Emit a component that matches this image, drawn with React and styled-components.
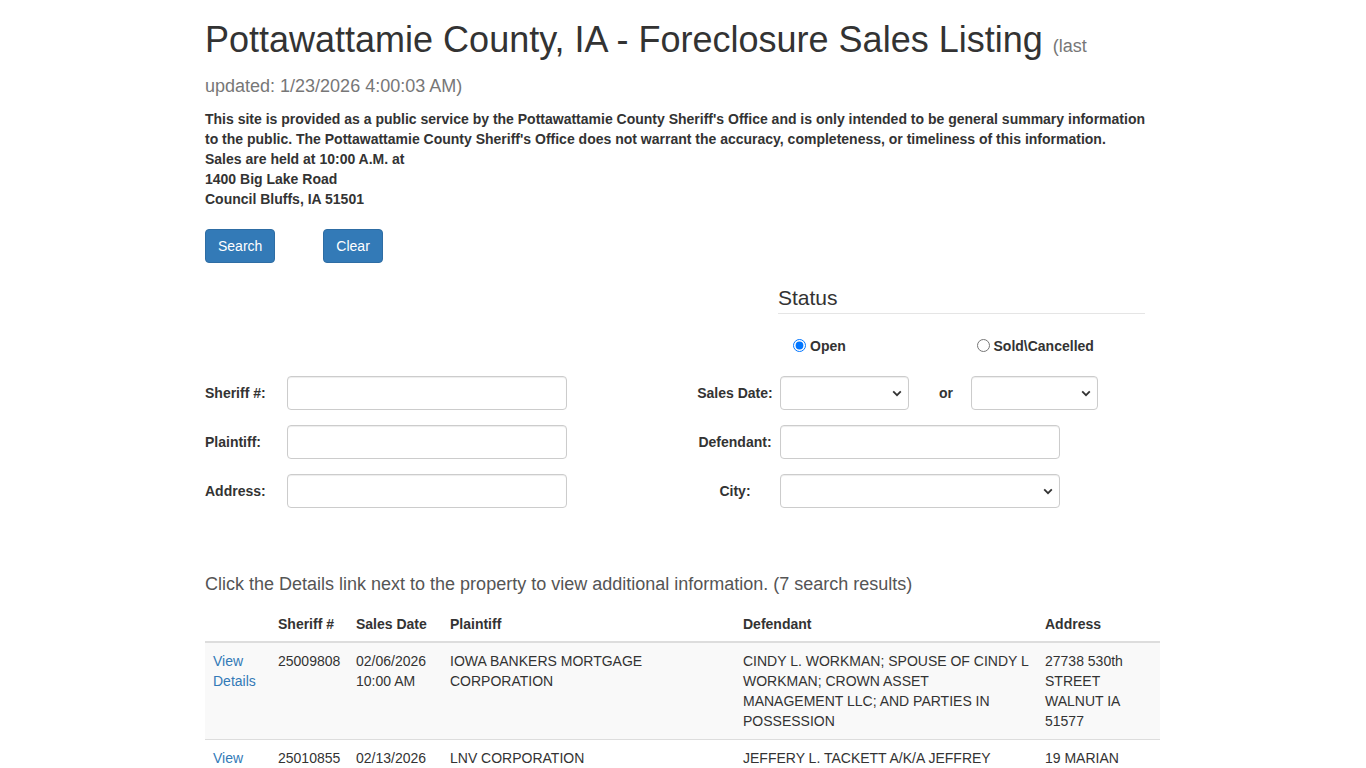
import React from "react";
import styled, { createGlobalStyle } from "styled-components";

const Global = createGlobalStyle`
  * { box-sizing: border-box; }
  html, body { margin: 0; padding: 0; background: #fff; }
  body {
    padding-right: 16px;
    font-family: "Liberation Sans", Arial, Helvetica, sans-serif;
    font-size: 14px;
    line-height: 20px;
    color: #333;
  }
`;

const Container = styled.div`
  width: 970px;
  margin: 0 auto;
  padding: 0 15px;
`;

const Title = styled.h1`
  margin: 20px 0 10px;
  font-size: 36px;
  font-weight: 500;
  line-height: 1.1;
  color: #333;
`;

const Small = styled.small`
  font-size: 18px;
  color: #777;
  font-weight: 400;
`;

const Notice = styled.p`
  margin: 0 0 20px;
  font-size: 14px;
  font-weight: 700;
  line-height: 20px;
  color: #333;
`;

const Buttons = styled.div`
  display: flex;
  gap: 48px;
  margin-bottom: 20px;
`;

const Button = styled.button`
  font-family: inherit;
  font-size: 14px;
  line-height: 20px;
  padding: 6px 12px;
  color: #fff;
  background: #337ab7;
  border: 1px solid #2e6da4;
  border-radius: 4px;
  cursor: pointer;
`;

const Form = styled.div`
  display: flex;
  flex-direction: column;
  gap: 15px;
`;

const FormRow = styled.div`
  display: grid;
  grid-template-columns: 470px 455px;
  column-gap: 15px;
  align-items: center;
`;

const Half = styled.div`
  display: flex;
  align-items: center;
`;

const StatusBox = styled.div`
  margin-left: 88px;
  margin-bottom: 5px;
  width: 367px;
`;

const Legend = styled.div`
  font-size: 21px;
  line-height: 30px;
  color: #333;
  border-bottom: 1px solid #e5e5e5;
  margin-bottom: 22px;
`;

const RadioGroup = styled.div`
  display: grid;
  grid-template-columns: 1fr 1fr;
`;

const RadioLabel = styled.label`
  display: flex;
  align-items: center;
  gap: 4px;
  padding-left: 15px;
  font-weight: 700;
  font-size: 14px;
  line-height: 20px;
  input {
    margin: 0 0 1px;
    width: 13px;
    height: 13px;
  }
`;

const Label = styled.label`
  flex: none;
  width: ${(p) => p.$w}px;
  text-align: ${(p) => p.$align || "left"};
  font-weight: 700;
  font-size: 14px;
`;

const Input = styled.input`
  width: ${(p) => p.$w}px;
  height: 34px;
  padding: 6px 12px;
  font-family: inherit;
  font-size: 14px;
  border: 1px solid #ccc;
  border-radius: 4px;
  box-shadow: inset 0 1px 1px rgba(0, 0, 0, 0.075);
  background: #fff;
`;

const SelectWrap = styled.div`
  position: relative;
  width: ${(p) => p.$w}px;
  height: 34px;
`;

const Select = styled.select`
  appearance: none;
  width: 100%;
  height: 34px;
  padding: 6px 12px;
  font-family: inherit;
  font-size: 14px;
  border: 1px solid #ccc;
  border-radius: 4px;
  box-shadow: inset 0 1px 1px rgba(0, 0, 0, 0.075);
  background: #fff;
`;

const Chevron = styled.svg`
  position: absolute;
  right: 7px;
  top: 14px;
  pointer-events: none;
`;

const OrCell = styled.div`
  width: 62px;
  text-align: center;
  padding-left: 12px;
  font-weight: 700;
`;

const Intro = styled.p`
  margin: 63px 0 9px;
  font-size: 18px;
  line-height: 26px;
  color: #555;
`;

const Table = styled.table`
  width: 955px;
  table-layout: fixed;
  border-collapse: collapse;
  border-spacing: 0;
  margin-bottom: 20px;
`;

const Th = styled.th`
  text-align: left;
  font-weight: 700;
  padding: 8px 8px 7px;
  vertical-align: bottom;
  border-bottom: 2px solid #ddd;
`;

const Tr = styled.tr`
  background: ${(p) => (p.$odd ? "#f9f9f9" : "#fff")};
`;

const Td = styled.td`
  padding: 8px;
  vertical-align: top;
  border-top: 1px solid #ddd;
  line-height: 20px;
`;

const Link = styled.a`
  color: #337ab7;
  text-decoration: none;
`;

const Dropdown = ({ w }) => (
  <SelectWrap $w={w}>
    <Select defaultValue="">
      <option value=""></option>
    </Select>
    <Chevron width="10" height="7" viewBox="0 0 10 7">
      <path d="M1.2 1.4 L5 5.2 L8.8 1.4" fill="none" stroke="#333" strokeWidth="1.8" />
    </Chevron>
  </SelectWrap>
);

const rows = [
  {
    id: "25009808",
    date: ["02/06/2026", "10:00 AM"],
    plaintiff: "IOWA BANKERS MORTGAGE CORPORATION",
    defendant:
      "CINDY L. WORKMAN; SPOUSE OF CINDY L WORKMAN; CROWN ASSET MANAGEMENT LLC; AND PARTIES IN POSSESSION",
    address: "27738 530th STREET WALNUT IA 51577",
  },
  {
    id: "25010855",
    date: ["02/13/2026", "10:00 AM"],
    plaintiff: "LNV CORPORATION",
    defendant:
      "JEFFERY L. TACKETT A/K/A JEFFREY TACKETT; SPOUSE OF JEFFERY L. TACKETT; AND PARTIES IN POSSESSION",
    address: "19 MARIAN CIRCLE COUNCIL BLUFFS IA 51503",
  },
  {
    id: "25011021",
    date: ["02/20/2026", "10:00 AM"],
    plaintiff: "MIDFIRST BANK",
    defendant: "JOHN DOE; JANE DOE; AND PARTIES IN POSSESSION",
    address: "1215 AVENUE B COUNCIL BLUFFS IA 51501",
  },
];

export default function App() {
  return (
    <>
      <Global />
      <Container>
        <Title>
          Pottawattamie County, IA - Foreclosure Sales Listing{" "}
          <Small>(last updated: 1/23/2026 4:00:03 AM)</Small>
        </Title>
        <Notice>
          This site is provided as a public service by the Pottawattamie County Sheriff's Office and is
          only intended to be general summary information to the public. The Pottawattamie County
          Sheriff's Office does not warrant the accuracy, completeness, or timeliness of this
          information.
          <br />
          Sales are held at 10:00 A.M. at
          <br />
          1400 Big Lake Road
          <br />
          Council Bluffs, IA 51501
        </Notice>
        <Buttons>
          <Button>Search</Button>
          <Button>Clear</Button>
        </Buttons>

        <Form>
          <FormRow>
            <Half />
            <Half>
              <StatusBox>
                <Legend>Status</Legend>
                <RadioGroup>
                  <RadioLabel>
                    <input type="radio" name="status" defaultChecked />
                    Open
                  </RadioLabel>
                  <RadioLabel>
                    <input type="radio" name="status" />
                    Sold\Cancelled
                  </RadioLabel>
                </RadioGroup>
              </StatusBox>
            </Half>
          </FormRow>
          <FormRow>
            <Half>
              <Label $w={82}>Sheriff #:</Label>
              <Input $w={280} />
            </Half>
            <Half>
              <Label $w={90} $align="center">Sales Date:</Label>
              <Dropdown w={129} />
              <OrCell>or</OrCell>
              <Dropdown w={127} />
            </Half>
          </FormRow>
          <FormRow>
            <Half>
              <Label $w={82}>Plaintiff:</Label>
              <Input $w={280} />
            </Half>
            <Half>
              <Label $w={90} $align="center">Defendant:</Label>
              <Input $w={280} />
            </Half>
          </FormRow>
          <FormRow>
            <Half>
              <Label $w={82}>Address:</Label>
              <Input $w={280} />
            </Half>
            <Half>
              <Label $w={90} $align="center">City:</Label>
              <Dropdown w={280} />
            </Half>
          </FormRow>
        </Form>

        <Intro>
          Click the Details link next to the property to view additional information. (7 search
          results)
        </Intro>

        <Table>
          <colgroup>
            <col style={{ width: 65 }} />
            <col style={{ width: 78 }} />
            <col style={{ width: 94 }} />
            <col style={{ width: 293 }} />
            <col style={{ width: 302 }} />
            <col style={{ width: 123 }} />
          </colgroup>
          <thead>
            <tr>
              <Th></Th>
              <Th>Sheriff #</Th>
              <Th>Sales Date</Th>
              <Th>Plaintiff</Th>
              <Th>Defendant</Th>
              <Th>Address</Th>
            </tr>
          </thead>
          <tbody>
            {rows.map((r, i) => (
              <Tr key={r.id} $odd={i % 2 === 0}>
                <Td>
                  <Link href="#">View Details</Link>
                </Td>
                <Td>{r.id}</Td>
                <Td>
                  {r.date[0]}
                  <br />
                  {r.date[1]}
                </Td>
                <Td>{r.plaintiff}</Td>
                <Td>{r.defendant}</Td>
                <Td>{r.address}</Td>
              </Tr>
            ))}
          </tbody>
        </Table>
      </Container>
    </>
  );
}
